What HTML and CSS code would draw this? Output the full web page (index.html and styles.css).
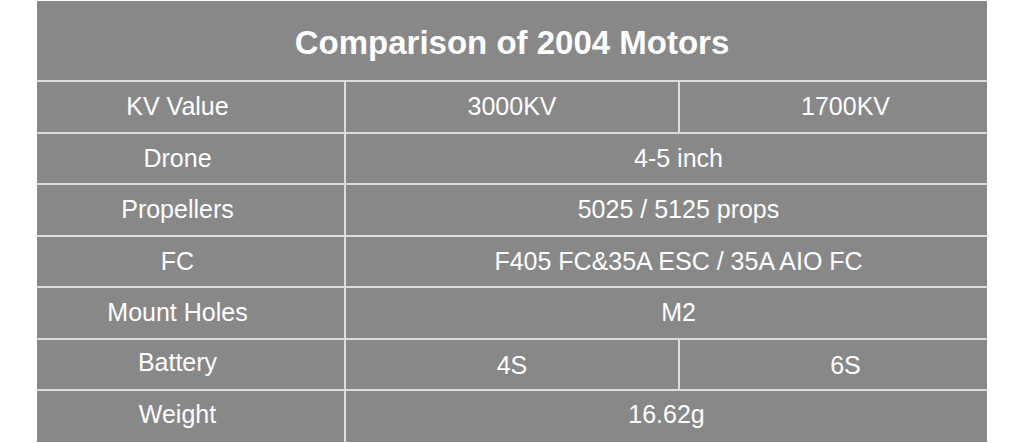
FILE: index.html
```html
<!DOCTYPE html>
<html lang="en">
<head>
    <meta charset="UTF-8">
    <title>Comparison of 2004 Motors</title>
    <link rel="stylesheet" href="styles.css">
</head>
<body>
    <table class="spec-table">
        <colgroup>
            <col class="col-label">
            <col class="col-mid">
            <col class="col-last">
        </colgroup>
        <tr>
            <th colspan="3" class="title">Comparison of 2004 Motors</th>
        </tr>
        <tr>
            <td class="label">KV Value</td>
            <td>3000KV</td>
            <td class="right">1700KV</td>
        </tr>
        <tr>
            <td class="label">Drone</td>
            <td colspan="2" class="right">4-5 inch</td>
        </tr>
        <tr>
            <td class="label">Propellers</td>
            <td colspan="2" class="right">5025 / 5125 props</td>
        </tr>
        <tr>
            <td class="label">FC</td>
            <td colspan="2" class="right">F405 FC&amp;35A ESC / 35A AIO FC</td>
        </tr>
        <tr>
            <td class="label">Mount Holes</td>
            <td colspan="2" class="right">M2</td>
        </tr>
        <tr class="battery">
            <td class="label">Battery</td>
            <td>4S</td>
            <td class="right">6S</td>
        </tr>
        <tr class="weight">
            <td class="label">Weight</td>
            <td colspan="2">16.62g</td>
        </tr>
    </table>
</body>
</html>
```

FILE: styles.css
```css
* {
    margin: 0;
    padding: 0;
    box-sizing: border-box;
}

body {
    background: #ffffff;
    font-family: "Liberation Sans", Arial, sans-serif;
    padding: 1px 0 0 37px;
}

.spec-table {
    width: 950px;
    border-collapse: collapse;
    background: #888888;
    color: #ffffff;
    table-layout: fixed;
}

.col-label {
    width: 308px;
}

.col-mid {
    width: 334px;
}

.col-last {
    width: 308px;
}

.spec-table th,
.spec-table td {
    border: 2px solid #dcdcdc;
    text-align: center;
    font-weight: normal;
    font-size: 25px;
    height: 51.5px;
}

.spec-table tr:first-child th {
    border-top: none;
}

.spec-table tr th,
.spec-table tr td:first-child {
    border-left: none;
}

.spec-table tr th,
.spec-table tr td:last-child {
    border-right: none;
}

.spec-table tr:last-child td {
    border-bottom: none;
}

.spec-table .title {
    height: 80px;
    font-size: 33px;
    font-weight: bold;
    padding-top: 4px;
}

.spec-table .label {
    padding-right: 26px;
}

.spec-table .right {
    padding-left: 24px;
}

.battery td.label {
    padding-bottom: 5px;
}

.battery td {
    padding-top: 2px;
}

.weight td {
    padding-bottom: 3px;
}
```
